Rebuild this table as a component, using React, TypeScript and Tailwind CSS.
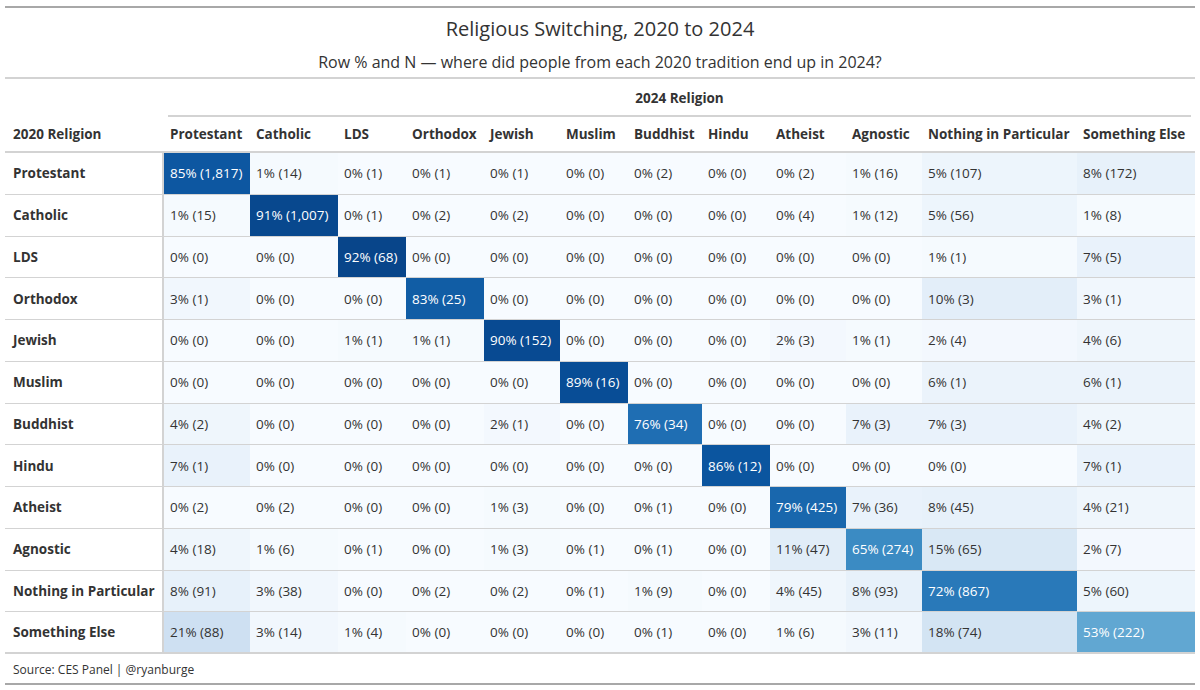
import React from "react"

const columns = [
  "Protestant",
  "Catholic",
  "LDS",
  "Orthodox",
  "Jewish",
  "Muslim",
  "Buddhist",
  "Hindu",
  "Atheist",
  "Agnostic",
  "Nothing in Particular",
  "Something Else",
]

// [pct, n] per cell, rows = 2020 religion, cols = 2024 religion
const rows: { name: string; cells: [number, string][] }[] = [
  { name: "Protestant", cells: [[85, "1,817"], [1, "14"], [0, "1"], [0, "1"], [0, "1"], [0, "0"], [0, "2"], [0, "0"], [0, "2"], [1, "16"], [5, "107"], [8, "172"]] },
  { name: "Catholic", cells: [[1, "15"], [91, "1,007"], [0, "1"], [0, "2"], [0, "2"], [0, "0"], [0, "0"], [0, "0"], [0, "4"], [1, "12"], [5, "56"], [1, "8"]] },
  { name: "LDS", cells: [[0, "0"], [0, "0"], [92, "68"], [0, "0"], [0, "0"], [0, "0"], [0, "0"], [0, "0"], [0, "0"], [0, "0"], [1, "1"], [7, "5"]] },
  { name: "Orthodox", cells: [[3, "1"], [0, "0"], [0, "0"], [83, "25"], [0, "0"], [0, "0"], [0, "0"], [0, "0"], [0, "0"], [0, "0"], [10, "3"], [3, "1"]] },
  { name: "Jewish", cells: [[0, "0"], [0, "0"], [1, "1"], [1, "1"], [90, "152"], [0, "0"], [0, "0"], [0, "0"], [2, "3"], [1, "1"], [2, "4"], [4, "6"]] },
  { name: "Muslim", cells: [[0, "0"], [0, "0"], [0, "0"], [0, "0"], [0, "0"], [89, "16"], [0, "0"], [0, "0"], [0, "0"], [0, "0"], [6, "1"], [6, "1"]] },
  { name: "Buddhist", cells: [[4, "2"], [0, "0"], [0, "0"], [0, "0"], [2, "1"], [0, "0"], [76, "34"], [0, "0"], [0, "0"], [7, "3"], [7, "3"], [4, "2"]] },
  { name: "Hindu", cells: [[7, "1"], [0, "0"], [0, "0"], [0, "0"], [0, "0"], [0, "0"], [0, "0"], [86, "12"], [0, "0"], [0, "0"], [0, "0"], [7, "1"]] },
  { name: "Atheist", cells: [[0, "2"], [0, "2"], [0, "0"], [0, "0"], [1, "3"], [0, "0"], [0, "1"], [0, "0"], [79, "425"], [7, "36"], [8, "45"], [4, "21"]] },
  { name: "Agnostic", cells: [[4, "18"], [1, "6"], [0, "1"], [0, "0"], [1, "3"], [0, "1"], [0, "1"], [0, "0"], [11, "47"], [65, "274"], [15, "65"], [2, "7"]] },
  { name: "Nothing in Particular", cells: [[8, "91"], [3, "38"], [0, "0"], [0, "2"], [0, "2"], [0, "1"], [1, "9"], [0, "0"], [4, "45"], [8, "93"], [72, "867"], [5, "60"]] },
  { name: "Something Else", cells: [[21, "88"], [3, "14"], [1, "4"], [0, "0"], [0, "0"], [0, "0"], [0, "1"], [0, "0"], [1, "6"], [3, "11"], [18, "74"], [53, "222"]] },
]

const blues = ["#f7fbff", "#deebf7", "#c6dbef", "#9ecae1", "#6baed6", "#4292c6", "#2171b5", "#08519c", "#08306b"]

function blueFor(pct: number) {
  const t = Math.min(Math.max(pct / 100, 0), 1) * (blues.length - 1)
  const i = Math.min(Math.floor(t), blues.length - 2)
  const f = t - i
  const a = blues[i]
  const b = blues[i + 1]
  const mix = (k: number) => {
    const x = parseInt(a.slice(k, k + 2), 16)
    const y = parseInt(b.slice(k, k + 2), 16)
    return Math.round(x + (y - x) * f)
      .toString(16)
      .padStart(2, "0")
  }
  return `#${mix(1)}${mix(3)}${mix(5)}`
}

const grid =
  "grid grid-cols-[159px_86px_88px_68px_78px_76px_68px_74px_68px_76px_76px_155px_118px]"

export default function App() {
  return (
    <div className="w-[1200px] h-[690px] bg-white pt-[6px] font-['Open_Sans',sans-serif] text-[#333333]">
      <div className="mx-[5px] w-[1190px] border-t-2 border-[#a8a8a8]">
        <div className="h-[40px] flex items-center justify-center text-[20px] pt-[1px]">
          Religious Switching, 2020 to 2024
        </div>
        <div className="h-[31px] flex items-start justify-center text-[16px] pt-[2px] border-b-2 border-[#d3d3d3]">
          Row % and N — where did people from each 2020 tradition end up in 2024?
        </div>

        <div className={grid}>
          <div />
          <div className="col-span-12 h-[38px] flex items-center justify-center text-[13.5px] font-bold px-[4px]">
            <div className="w-full h-full flex items-center justify-center border-b-2 border-[#d3d3d3] pt-[2px]">
              2024 Religion
            </div>
          </div>
        </div>

        <div className={`${grid} h-[36px] border-b-2 border-[#d3d3d3] text-[13.5px] font-bold`}>
          <div className="flex items-center px-[8px] whitespace-nowrap">2020 Religion</div>
          {columns.map((c) => (
            <div key={c} className="flex items-center px-[6px] whitespace-nowrap">
              {c}
            </div>
          ))}
        </div>

        {rows.map((r, ri) => (
          <div
            key={r.name}
            className={`${grid} h-[41.75px] border-b border-[#d3d3d3] ${ri === rows.length - 1 ? "border-b-2" : ""}`}
          >
            <div className="flex items-center px-[8px] text-[13.5px] font-bold whitespace-nowrap border-r-2 border-[#d3d3d3]">
              {r.name}
            </div>
            {r.cells.map(([pct, n], ci) => (
              <div
                key={ci}
                className={`flex items-center px-[6px] text-[13.5px] whitespace-nowrap ${pct >= 40 ? "text-white" : "text-[#333333]"}`}
                style={{ backgroundColor: blueFor(pct) }}
              >
                {pct}% ({n})
              </div>
            ))}
          </div>
        ))}

        <div className="h-[31px] flex items-center px-[8px] pt-[3px] text-[12px] border-b-2 border-[#a8a8a8]">
          Source: CES Panel | @ryanburge
        </div>
      </div>
    </div>
  )
}
